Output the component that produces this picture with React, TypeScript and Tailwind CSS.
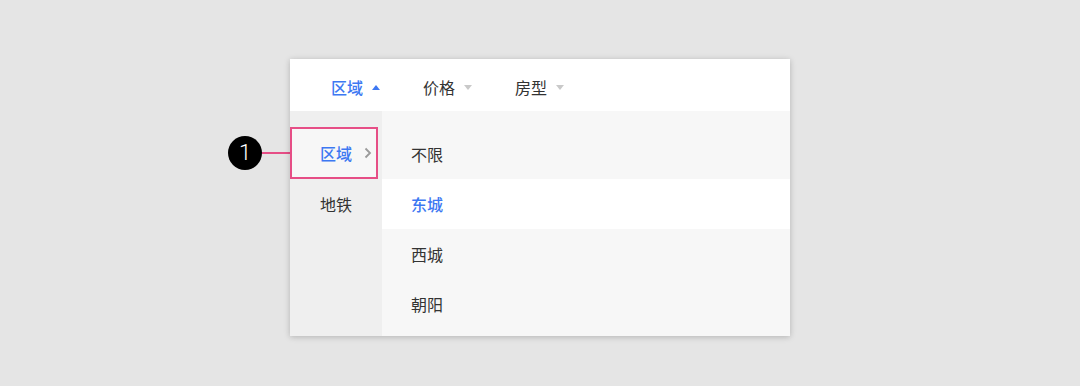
import React from "react";

const font = { fontFamily: '"Noto Sans CJK SC", "Noto Sans", sans-serif' };

function Tri({ up, active }: { up?: boolean; active?: boolean }) {
  return (
    <svg width="8" height="5" viewBox="0 0 8 5" className="ml-[9px]">
      {up ? (
        <path d="M4 0 L8 5 L0 5 Z" fill={active ? "#3d78f2" : "#c9c9c9"} />
      ) : (
        <path d="M0 0 L8 0 L4 5 Z" fill="#c9c9c9" />
      )}
    </svg>
  );
}

export default function App() {
  const right = ["不限", "东城", "西城", "朝阳"];
  return (
    <div
      className="w-[1080px] h-[386px] bg-[#e5e5e5] flex items-start pt-[59px] pl-[228px]"
      style={font}
    >
      {/* annotation */}
      <div className="flex items-center mt-[77px] w-[62px]">
        <div className="w-[34px] h-[34px] rounded-full bg-black text-white flex items-center justify-center text-[22px] leading-none font-light font-['Roboto',sans-serif]">
          1
        </div>
        <div className="flex-1 h-[2px] bg-[#e64e86]" />
      </div>
      <div className="w-[500px] h-[277px] bg-white shadow-[0_1px_6px_rgba(0,0,0,0.22)] flex flex-col">
        <div className="h-[52px] flex items-center pl-[41px] pt-[4px] text-[16px] text-[#333]">
          <div className="flex items-center text-[#3d78f2] font-medium w-[92px]">
            区域
            <Tri up active />
          </div>
          <div className="flex items-center w-[92px]">
            价格
            <Tri />
          </div>
          <div className="flex items-center">
            房型
            <Tri />
          </div>
        </div>
        <div className="flex flex-1">
          <div className="w-[92px] bg-[#efefef] pt-[16px] text-[16px]">
            <div className="relative h-[52px] w-[88px] bg-[#f7f7f7] border-2 border-[#e64e86] flex items-center pl-[28px] text-[#3d78f2] font-medium">
              区域
              <svg width="8" height="12" viewBox="0 0 8 12" className="ml-[12px]">
                <path d="M1.5 1.5 L6 6 L1.5 10.5" stroke="#9a9a9a" strokeWidth="1.8" fill="none" />
              </svg>
            </div>
            <div className="h-[50px] flex items-center pl-[30px] text-[#333]">地铁</div>
          </div>
          <div className="flex-1 bg-[#f7f7f7] pt-[18px] text-[16px]">
            {right.map((t, i) => (
              <div
                key={t}
                className={
                  i === 1
                    ? "h-[50px] flex items-center pl-[29px] bg-white text-[#3d78f2] font-medium"
                    : "h-[50px] flex items-center pl-[29px] text-[#333]"
                }
              >
                {t}
              </div>
            ))}
          </div>
        </div>
      </div>
    </div>
  );
}
